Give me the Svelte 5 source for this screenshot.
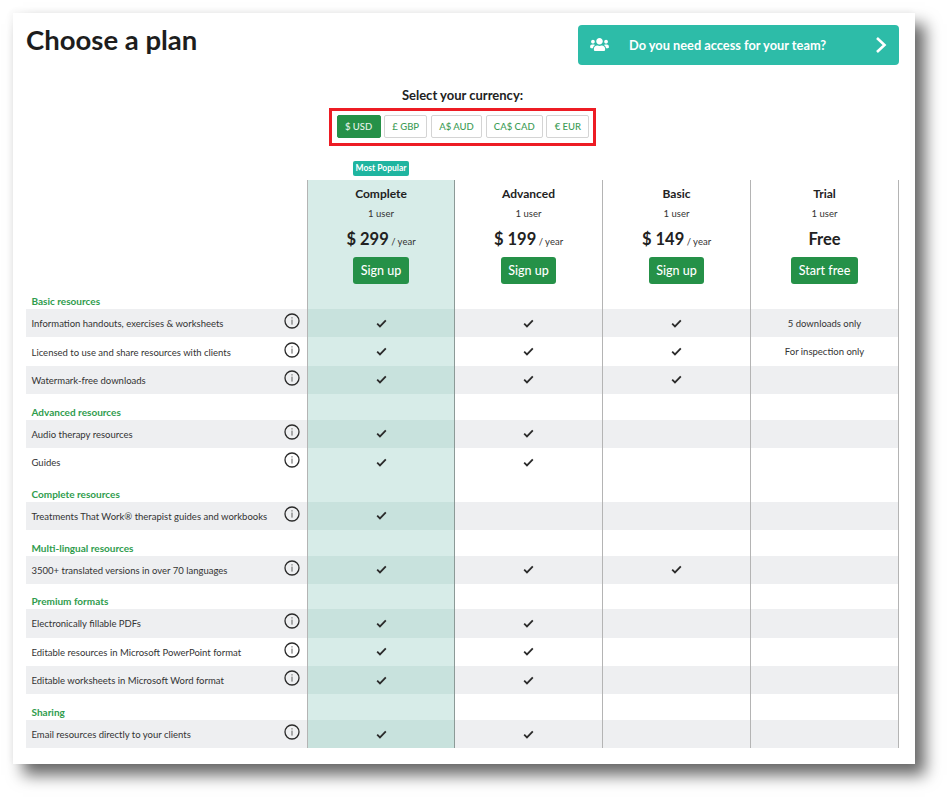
<script>
  const currencies = ['$ USD', '£ GBP', 'A$ AUD', 'CA$ CAD', '€ EUR'];

  const plans = [
    { name: 'Complete', price: '$ 299', cta: 'Sign up', featured: true },
    { name: 'Advanced', price: '$ 199', cta: 'Sign up' },
    { name: 'Basic', price: '$ 149', cta: 'Sign up' },
    { name: 'Trial', price: 'Free', cta: 'Start free' }
  ];

  // 1 = check mark, string = note, 0 = empty
  const groups = [
    {
      title: 'Basic resources',
      rows: [
        ['Information handouts, exercises & worksheets', 1, 1, 1, '5 downloads only'],
        ['Licensed to use and share resources with clients', 1, 1, 1, 'For inspection only'],
        ['Watermark-free downloads', 1, 1, 1, 0]
      ]
    },
    {
      title: 'Advanced resources',
      rows: [
        ['Audio therapy resources', 1, 1, 0, 0],
        ['Guides', 1, 1, 0, 0]
      ]
    },
    {
      title: 'Complete resources',
      rows: [['Treatments That Work® therapist guides and workbooks', 1, 0, 0, 0]]
    },
    {
      title: 'Multi-lingual resources',
      rows: [['3500+ translated versions in over 70 languages', 1, 1, 1, 0]]
    },
    {
      title: 'Premium formats',
      rows: [
        ['Electronically fillable PDFs', 1, 1, 0, 0],
        ['Editable resources in Microsoft PowerPoint format', 1, 1, 0, 0],
        ['Editable worksheets in Microsoft Word format', 1, 1, 0, 0]
      ]
    },
    {
      title: 'Sharing',
      rows: [['Email resources directly to your clients', 1, 1, 0, 0]]
    }
  ];
</script>

<div class="page">
  <div class="card">
    <header class="top">
      <h1>Choose a plan</h1>
      <a class="team" href="#team">
        <svg class="team-icon" viewBox="0 0 640 512" aria-hidden="true">
          <path fill="currentColor" d="M96 224c35.3 0 64-28.7 64-64s-28.7-64-64-64-64 28.7-64 64 28.7 64 64 64zm448 0c35.3 0 64-28.7 64-64s-28.7-64-64-64-64 28.7-64 64 28.7 64 64 64zm32 32h-64c-17.6 0-33.5 7.1-45.1 18.6 40.3 22.1 68.9 62 75.1 109.4h66c17.7 0 32-14.3 32-32v-32c0-35.3-28.7-64-64-64zm-256 0c61.9 0 112-50.1 112-112S381.9 32 320 32 208 82.1 208 144s50.1 112 112 112zm76.8 32h-8.3c-20.8 10-43.9 16-68.5 16s-47.6-6-68.5-16h-8.3C179.6 288 128 339.6 128 403.2V432c0 26.5 21.5 48 48 48h288c26.5 0 48-21.5 48-48v-28.8c0-63.6-51.6-115.2-115.2-115.2zm-223.7-13.4C161.5 263.1 145.6 256 128 256H64c-35.3 0-64 28.7-64 64v32c0 17.7 14.3 32 32 32h65.9c6.3-47.4 34.9-87.3 75.2-109.4z" />
        </svg>
        <span>Do you need access for your team?</span>
        <svg class="chevron" viewBox="0 0 12 18" aria-hidden="true">
          <polyline points="2,2 9.5,9 2,16" fill="none" stroke="currentColor" stroke-width="2.6" />
        </svg>
      </a>
    </header>

    <section class="currency">
      <p>Select your currency:</p>
      <div class="currency-box">
        {#each currencies as c, i}
          <button class:active={i === 0}>{c}</button>
        {/each}
      </div>
    </section>

    <div class="grid popular-row">
      <div></div>
      <div class="popular-cell"><span class="popular">Most Popular</span></div>
    </div>

    <div class="grid head">
      <div class="label"></div>
      {#each plans as plan}
        <div class="cell plan" class:featured={plan.featured}>
          <h2>{plan.name}</h2>
          <div class="users">1 user</div>
          <div class="price">
            {plan.price}{#if plan.price !== 'Free'}<small>&nbsp;/ year</small>{/if}
          </div>
          <button class="cta">{plan.cta}</button>
        </div>
      {/each}
    </div>

    {#each groups as group, g}
      <div class="grid group" class:first={g === 0}>
        <div class="label group-title">{group.title}</div>
        {#each plans as plan}
          <div class="cell" class:featured={plan.featured}></div>
        {/each}
      </div>
      {#each group.rows as row, r}
        <div class="grid row" class:shade={r % 2 === 0}>
          <div class="label feature">
            <span>{row[0]}</span>
            <svg class="info" viewBox="0 0 16 16" aria-hidden="true">
              <circle cx="8" cy="8" r="7" fill="none" stroke="#2a2a2a" stroke-width="1.3" />
              <rect x="7.4" y="6.6" width="1.2" height="5" fill="#777" />
              <rect x="7.4" y="4.2" width="1.2" height="1.3" fill="#777" />
            </svg>
          </div>
          {#each plans as plan, p}
            <div class="cell" class:featured={plan.featured}>
              {#if row[p + 1] === 1}
                <svg class="check" viewBox="0 0 12 10" aria-hidden="true">
                  <polyline points="1.2,5.2 4.3,8.2 10.8,1.6" fill="none" stroke="#2b2b2b" stroke-width="2" />
                </svg>
              {:else if row[p + 1]}
                <span class="note">{row[p + 1]}</span>
              {/if}
            </div>
          {/each}
        </div>
      {/each}
    {/each}
  </div>
</div>

<style>
  :global(body) {
    background: #fff;
    font-family: Lato, "Liberation Sans", sans-serif;
    color: #222;
  }

  .page {
    box-sizing: border-box;
    height: 800px;
    padding: 13px 0 0 13px;
    overflow: hidden;
  }

  .card {
    box-sizing: border-box;
    width: 902px;
    height: 751px;
    padding: 11.5px 16px 0 13px;
    background: #fff;
    box-shadow: 10px 11px 15px rgba(0, 0, 0, 0.6), -2px -2px 6px rgba(0, 0, 0, 0.04);
  }

  .top {
    display: flex;
    justify-content: space-between;
    align-items: flex-start;
    height: 40px;
  }

  h1 {
    margin: -1.5px 0 0;
    font-size: 27.5px;
    line-height: 34px;
    font-weight: 700;
    color: #1d1d1d;
  }

  .team {
    display: flex;
    align-items: center;
    width: 321px;
    height: 40px;
    box-sizing: border-box;
    padding: 0 12px;
    border-radius: 4px;
    background: #2dbca8;
    color: #fff;
    text-decoration: none;
    font-size: 12.8px;
    font-weight: 700;
  }

  .team span {
    flex: 1;
    margin-left: 20px;
  }

  .team-icon {
    width: 19px;
    height: 15px;
  }

  .chevron {
    width: 12px;
    height: 18px;
  }

  .currency {
    display: flex;
    flex-direction: column;
    align-items: center;
    margin-top: 22.5px;
  }

  .currency p {
    margin: 0;
    font-size: 13px;
    line-height: 17px;
    font-weight: 700;
    color: #222;
  }

  .currency-box {
    display: flex;
    gap: 3.5px;
    margin-top: 3.5px;
    padding: 4px 4px 5px 5px;
    border: 3px solid #ed1c24;
  }

  .currency-box button {
    height: 23px;
    padding: 0 7.3px;
    border: 1px solid #d4d4d4;
    border-radius: 2px;
    background: #fff;
    color: #3d9c56;
    font: 500 9.5px Lato, sans-serif;
  }

  .currency-box button.active {
    background: #259148;
    border-color: #259148;
    color: #e6f3ea;
  }

  .popular-row {
    height: 19px;
    margin-top: 15px;
  }

  .popular-cell {
    display: flex;
    justify-content: center;
  }

  .popular {
    height: 15px;
    padding: 0 2.5px;
    border-radius: 2px;
    background: #1fb5a0;
    color: #fff;
    font-size: 8.5px;
    line-height: 15px;
    font-weight: 700;
  }

  .grid {
    display: grid;
    grid-template-columns: 281px repeat(4, 148px);
  }

  .cell {
    box-sizing: border-box;
    display: flex;
    align-items: center;
    justify-content: center;
    border-right: 1px solid #b4b4b4;
    min-width: 0;
  }

  .cell.featured {
    background: #d7ece8;
    border-left: 1px solid #b4b4b4;
    border-right-color: #8c9a97;
  }

  .plan {
    flex-direction: column;
    justify-content: flex-start;
    height: 114px;
    padding-top: 6px;
  }

  .plan h2 {
    margin: 0;
    font-size: 12px;
    line-height: 16px;
    font-weight: 700;
  }

  .users {
    margin-top: 5.5px;
    font-size: 9.5px;
    line-height: 14px;
    color: #333;
  }

  .price {
    height: 22px;
    margin-top: 6.5px;
    font-size: 16.5px;
    line-height: 22px;
    font-weight: 700;
  }

  .price small {
    font-size: 9.5px;
    font-weight: 400;
    color: #333;
  }

  .cta {
    height: 27px;
    margin-top: 7px;
    padding: 0 7.5px;
    min-width: 55px;
    border: 0;
    border-radius: 3px;
    background: #259148;
    color: #fff;
    font: 500 12.5px Lato, sans-serif;
  }

  .group {
    height: 25.4px;
  }

  .group.first {
    height: 15.5px;
  }

  .group-title {
    display: flex;
    align-items: flex-end;
    box-sizing: border-box;
    padding: 0 0 2px 5.5px;
    font-size: 10px;
    line-height: 12px;
    font-weight: 700;
    color: #2f9c4d;
  }

  .row {
    height: 28.4px;
  }

  .feature {
    display: flex;
    align-items: center;
    justify-content: space-between;
    padding: 1px 7px 0 5.5px;
    font-size: 9.5px;
    color: #333;
  }

  .row.shade .label,
  .row.shade .cell {
    background: #eeeff1;
  }

  .row.shade .cell.featured {
    background: #c8e2dd;
  }

  .info {
    width: 16px;
    height: 16px;
    margin-top: -5px;
  }

  .check {
    width: 11px;
    height: 9px;
  }

  .note {
    font-size: 9.5px;
    color: #333;
  }
</style>
